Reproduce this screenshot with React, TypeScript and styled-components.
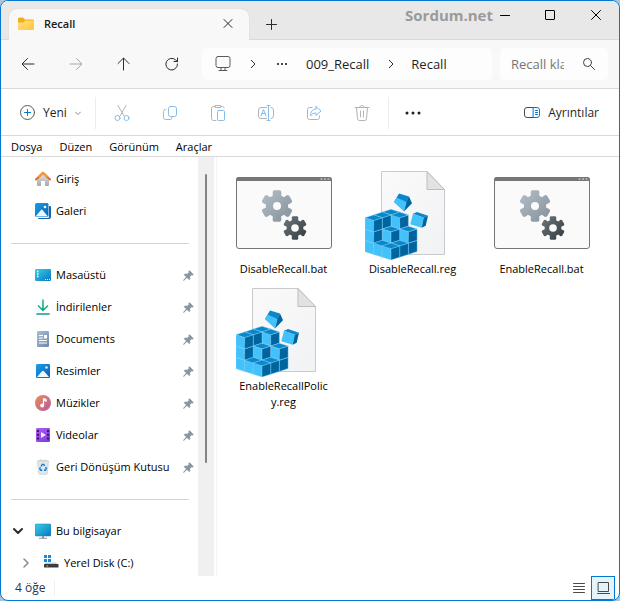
import React from 'react';
import styled, { createGlobalStyle, css } from 'styled-components';

const GlobalStyle = createGlobalStyle`
  *, *::before, *::after { box-sizing: border-box; }
  body {
    margin: 0;
    background: #a9c4dc;
    color: #000;
    font-family: "Open Sans", "Noto Sans", sans-serif;
    font-size: 12px;
    line-height: 16px;
  }
  button, input { font: inherit; color: inherit; }
  svg { display: block; flex: none; }
`;

const Window = styled.main`
  display: flex;
  flex-direction: column;
  height: 100vh;
  min-height: 400px;
  border: 1px solid #0078d4;
  border-radius: 8px;
  background: #fff;
  overflow: hidden;
`;

const PlainButton = styled.button`
  display: flex;
  align-items: center;
  padding: 0;
  border: 0;
  background: none;
  white-space: nowrap;
`;

const TitleBar = styled.header`
  display: flex;
  height: 39px;
  flex: none;
  padding-left: 8px;
  background: #e8e8e8;
  box-shadow: inset 0 -1px #d9d9d9;
`;

const Tab = styled.div`
  display: flex;
  align-items: center;
  width: 240px;
  margin-top: 8px;
  padding: 0 13px 1px 8px;
  gap: 9px;
  border-radius: 8px 8px 0 0;
  background: #f8f8f8;
  box-shadow: 0 0 1px #bdbdbd;
  clip-path: inset(-2px -2px 0 -2px);
`;

const TabTitle = styled.span`
  flex: 1;
  color: #1a1a1a;
  font-size: 11px;
  font-weight: 600;
`;

const NewTab = styled(PlainButton)`
  width: 44px;
  justify-content: center;
  padding-top: 6px;
`;

const Brand = styled.div`
  flex: 1;
  padding-top: 4px;
  color: #9a9a9a;
  font-size: 15px;
  line-height: 20px;
  font-weight: 700;
  text-align: right;
`;

const Caption = styled.div`
  display: flex;
  height: 28px;
`;

const CaptionButton = styled(PlainButton)<{ $narrow?: boolean }>`
  width: 46px;
  justify-content: center;
  ${p => p.$narrow && css`
    width: 34px;
    padding-right: 10px;
  `}
`;

const NavBar = styled.nav`
  display: flex;
  align-items: center;
  height: 49px;
  flex: none;
  gap: 8px;
  padding: 0 11px 0 3px;
  border-bottom: 1px solid #d9d9d9;
  background: #f8f8f8;
`;

const NavButtons = styled.div`
  display: flex;
  width: 190px;
  flex: none;
`;

const NavButton = styled(PlainButton)`
  width: 48px;
  height: 32px;
  flex: none;
  justify-content: center;
`;

const Address = styled.div`
  display: flex;
  align-items: center;
  flex: 1;
  height: 32px;
  padding-left: 13px;
  border-radius: 5px;
  background: #fdfdfd;
  color: #1f1f1f;
  font-size: 13px;
`;

const Crumb = styled(PlainButton)<{ $gap: number }>`
  margin-right: ${p => p.$gap}px;
`;

const Search = styled.label`
  display: flex;
  align-items: center;
  justify-content: space-between;
  width: 108px;
  height: 32px;
  padding: 0 13px 0 11px;
  border-radius: 5px;
  background: #fdfdfd;
  font-size: 13px;
`;

const SearchInput = styled.input`
  width: 53px;
  padding: 0;
  border: 0;
  outline: 0;
  background: none;
  &::placeholder { color: #767676; opacity: 1; }
`;

const ToolBar = styled.div`
  display: flex;
  align-items: center;
  height: 47px;
  flex: none;
  padding: 2px 20px 0 18px;
  border-bottom: 1px solid #d9d9d9;
  color: #1f1f1f;
`;

const NewButton = styled(PlainButton)`
  width: 76px;
  gap: 8px;
`;

const ToolButton = styled(PlainButton)`
  width: 48px;
  height: 32px;
  justify-content: center;
`;

const ToolGroup = styled.div`
  display: flex;
  margin-right: auto;
  border-left: 1px solid #ededed;
  padding-left: 2px;
`;

const ToolItems = styled.div`
  display: flex;
  padding-right: 2px;
  border-right: 1px solid #ededed;
`;

const Details = styled(PlainButton)`
  gap: 8px;
`;

const MenuBar = styled.div`
  display: flex;
  align-items: center;
  height: 21px;
  flex: none;
  gap: 17px;
  padding: 1px 10px 0;
  border-bottom: 1px solid #d9d9d9;
  font-size: 11px;
`;

const Body = styled.div`
  display: flex;
  flex: 1;
  min-height: 0;
  font-size: 11px;
`;

const SideBar = styled.aside`
  display: flex;
  flex-direction: column;
  width: 197px;
  flex: none;
  padding-top: 6px;
  overflow: hidden;
`;

const SideItem = styled(PlainButton)<{ $level?: 'root' | 'child' }>`
  height: 32px;
  flex: none;
  gap: 5px;
  padding: 0 4px 0 34px;
  text-align: left;
  span { flex: 1; }
  ${p => p.$level && css`padding-left: ${p.$level === 'root' ? 11 : 19}px;`}
`;

const TwistySlot = styled.i`
  display: flex;
  width: 18px;
`;

const SideRule = styled.hr`
  width: 178px;
  flex: none;
  margin: 16px 0 15px 10px;
  border: 0;
  border-top: 1px solid #d4d4d4;
`;

const ScrollTrack = styled.div`
  width: 19px;
  flex: none;
  padding: 17px 7px;
  border-right: 1px solid #f3f3f3;
  background: linear-gradient(to right, #f0f0f0 16px, #fff 16px);
`;

const ScrollThumb = styled.div`
  width: 2px;
  height: 75%;
  border-radius: 1px;
  background: #858585;
`;

const Files = styled.section`
  display: grid;
  grid-template-columns: repeat(auto-fill, 129px);
  align-content: start;
  flex: 1;
  gap: 4px 0;
  padding: 7px 0 0 2px;
`;

const FileTile = styled(PlainButton)`
  flex-direction: column;
  justify-content: flex-start;
  gap: 1px;
  min-height: 113px;
`;

const FileName = styled.span`
  width: 92px;
  text-align: center;
  white-space: normal;
  overflow-wrap: anywhere;
`;

const StatusBar = styled.footer`
  display: flex;
  align-items: center;
  height: 24px;
  flex: none;
  padding: 0 4px 0 14px;
  color: #1e395b;
`;

const ItemCount = styled.span`
  width: 40px;
  margin-right: auto;
  border-right: 1px solid #f0f0f0;
`;

const ViewButton = styled(PlainButton)<{ $active?: boolean }>`
  width: 24px;
  height: 24px;
  justify-content: center;
  border: 1px solid ${p => (p.$active ? '#0078d4' : 'transparent')};
  background: ${p => (p.$active ? '#e5f3fb' : 'none')};
`;

const HiddenDefs = styled.svg`
  position: absolute;
`;

type LineProps = { d: string; size?: number; color?: string; width?: number; children?: React.ReactNode };
const Line = ({ d, size = 16, color = '#2b2b2b', width = 1, children }: LineProps) => (
  <svg width={size} height={size} viewBox={`0 0 ${size} ${size}`} fill="none" stroke={color}
    strokeWidth={width} strokeLinecap="round" strokeLinejoin="round" aria-hidden="true">
    <path d={d} />
    {children}
  </svg>
);

const Dots = ({ size, r }: { size: number; r: number }) => (
  <svg width={size} height="16" viewBox={`0 0 ${size} 16`} fill="#1f1f1f" aria-hidden="true">
    <circle cx={2} cy="8" r={r} /><circle cx={size / 2} cy="8" r={r} /><circle cx={size - 2} cy="8" r={r} />
  </svg>
);

const Defs = () => (
  <HiddenDefs width="0" height="0" aria-hidden="true">
    <defs>
      <linearGradient id="folder" x2="1" y2="1"><stop stopColor="#ffe08a" /><stop offset="1" stopColor="#ffc736" /></linearGradient>
      <linearGradient id="blue" x2="1" y2="1"><stop stopColor="#1aa0e8" /><stop offset="1" stopColor="#0a5fb8" /></linearGradient>
      <linearGradient id="cyan" x2="1" y2="1"><stop stopColor="#35d3e4" /><stop offset="1" stopColor="#0b74c4" /></linearGradient>
      <linearGradient id="green" gradientUnits="userSpaceOnUse" x1="0" y1="1" x2="0" y2="15"><stop stopColor="#2fc290" /><stop offset="1" stopColor="#0a9b92" /></linearGradient>
      <linearGradient id="slate" x2="1" y2="1"><stop stopColor="#a9bfd6" /><stop offset="1" stopColor="#6c89aa" /></linearGradient>
      <linearGradient id="music" x2="1" y2="1"><stop stopColor="#f08b54" /><stop offset="1" stopColor="#b3599f" /></linearGradient>
      <linearGradient id="video" x2="1" y2="1"><stop stopColor="#b160ee" /><stop offset="1" stopColor="#7b37dd" /></linearGradient>
      <linearGradient id="gearLight" x2="1" y2="1"><stop stopColor="#b4bfc8" /><stop offset="1" stopColor="#84909a" /></linearGradient>
      <linearGradient id="gearDark" x2="1" y2="1"><stop stopColor="#6b777e" /><stop offset="1" stopColor="#363b3e" /></linearGradient>
      <linearGradient id="paper" x2="1" y2="1"><stop stopColor="#fafafa" /><stop offset="1" stopColor="#f1f2f4" /></linearGradient>
      <linearGradient id="wall" x2="0" y2="1"><stop stopColor="#e3e3e3" /><stop offset="1" stopColor="#a9a9a9" /></linearGradient>
    </defs>
  </HiddenDefs>
);

const sideIcons: Record<string, React.ReactNode> = {
  home: <>
    <path d="M2 7.500 8 2.500l6 5V14a1 1 0 0 1-1 1h-3v-5H6v5H3a1 1 0 0 1-1-1z" fill="url(#wall)" />
    <path d="m1 8.500 7-6.800 7 6.800" fill="none" stroke="#e8662a" strokeWidth="2" strokeLinecap="round" strokeLinejoin="round" />
    <path d="m3.500 6 4.500-4.300L12.500 6" fill="none" stroke="#f39a34" strokeWidth="1.800" strokeLinejoin="round" />
  </>,
  gallery: <>
    <path d="M14 3h1a1 1 0 0 1 1 1v10a2 2 0 0 1-2 2H4a1 1 0 0 1-1-1h10a1 1 0 0 0 1-1z" fill="#1665b5" />
    <rect width="13.500" height="14" rx="1.500" fill="url(#blue)" /><path d="m.500 13.500 5.500-6.500a1 1 0 0 1 1.500 0l5.500 6.500z" fill="#eaf7ff" /><circle cx="10" cy="4" r="1.300" fill="#fff" />
  </>,
  desktop: <>
    <rect y="2" width="16" height="12" rx="1.200" fill="url(#cyan)" /><path d="M2 4.500h2M2 7h2M2 9.500h2" stroke="#eaffff" strokeWidth="1.300" strokeDasharray="1.500" /><path d="M10 12.500h1m1 0h1m1 0h1" stroke="#d8f4ff" />
  </>,
  download: <path d="M8 1v10M3.500 7 8 11.500 12.500 7M2 15h12" fill="none" stroke="url(#green)" strokeWidth="1.700" strokeLinecap="round" strokeLinejoin="round" />,
  documents: <>
    <rect x="2" width="12" height="16" rx="1.200" fill="url(#slate)" /><path d="M4 4.500h4M4 7h4M4 9.500h8M4 12h8" stroke="#fff" /><rect x="9" y="4" width="3" height="3.500" fill="#fff" />
  </>,
  pictures: <>
    <rect x="1" y="1" width="14" height="14" rx="1.200" fill="url(#blue)" /><path d="M2 14 7 8.300a1.300 1.300 0 0 1 2 0L14 14z" fill="#f3faff" /><circle cx="11.500" cy="4.500" r="1.300" fill="#d8f0ff" />
  </>,
  music: <>
    <circle cx="8" cy="8" r="8" fill="url(#music)" /><path d="M8.500 3.500v6.500M8.500 3.500l2.500 1v1.500L8.500 5" fill="#fff" stroke="#fff" strokeWidth="1.200" /><circle cx="7.200" cy="10.500" r="2" fill="#fff" />
  </>,
  videos: <>
    <rect x="1" y="1" width="14" height="14" rx="1.200" fill="url(#video)" /><path d="M3 3v11M13 3v11" stroke="#3b1671" strokeWidth="2" strokeDasharray="2 1.700" /><path d="M6 5v6l5-3z" fill="#f2e6ff" />
  </>,
  bin: <>
    <path d="m2.500 2 1.300 12.500a1 1 0 0 0 1 .8h6.400a1 1 0 0 0 1-.8L13.500 2z" fill="#e2e7ea" stroke="#c3cacf" strokeWidth=".700" /><path d="m3.500 2 2-1.300L8 2l2-1 2.500 1" fill="#d5dadd" stroke="#bec7cd" strokeWidth=".700" />
    <path d="m6 7.500 1.200-2h1.600l.900 1.400M10.500 8l.900 1.600-1 1.600H9M7.300 11.200H5.600l-.900-1.500L5.500 8.300" fill="none" stroke="#1782d4" strokeWidth="1.400" />
  </>,
  computer: <>
    <rect y="1" width="16" height="12" rx="1" fill="url(#cyan)" stroke="#2379a7" strokeWidth=".500" /><path d="M7 13h2v2H7zM4 14.700h8v1H4z" fill="#8796a1" />
  </>,
  disk: <>
    <path d="M1 0h3v3H1zm4 0h3v3H5zM1 4h3v3H1zm4 0h3v3H5z" fill="#0d8ee4" /><path d="m2.500 7.500-1.500 2h14l-2.500-2z" fill="#c8cbce" /><rect x="1" y="9" width="14.500" height="3.500" rx=".600" fill="#393d41" /><path d="M3.500 11h1.500" stroke="#6ee66e" />
  </>,
};

const SideIcon = ({ name }: { name: string }) => (
  <svg width="16" height="16" viewBox="0 0 16 16" aria-hidden="true">{sideIcons[name]}</svg>
);

const Pin = () => (
  <svg width="11" height="11" viewBox="0 0 11 11" fill="#8b979f" aria-hidden="true">
    <path d="M6.500.300 10.700 4.500 9.500 5.400 8.400 5.300 7.100 6.800 7.200 8.900 6.200 10 3.900 7.800 1 10.700.200 10.700.300 9.900 3 6.900.800 4.700 1.900 3.700 4.200 3.800 5.700 2.400 5.500 1.300z" />
  </svg>
);

const gearPath = (cx: number, cy: number, outer: number, hole: number) => {
  const root = outer * 0.7;
  const points: string[] = [];
  for (let tooth = 0; tooth < 6; tooth += 1) {
    const middle = (tooth * 60 - 90) * (Math.PI / 180);
    [[-0.38, root], [-0.3, outer * 0.93], [-0.2, outer], [0.2, outer], [0.3, outer * 0.93], [0.38, root]].forEach(([turn, r]) => {
      points.push(`${(cx + r * Math.cos(middle + turn)).toFixed(2)} ${(cy + r * Math.sin(middle + turn)).toFixed(2)}`);
    });
  }
  return `M${points.join('L')}ZM${cx - hole} ${cy}a${hole} ${hole} 0 1 0 ${hole * 2} 0a${hole} ${hole} 0 1 0 ${-hole * 2} 0Z`;
};

const BatIcon = () => (
  <svg width="96" height="96" viewBox="0 0 96 96" aria-hidden="true">
    <rect x=".5" y="13.500" width="95" height="71" rx="2.500" fill="#fafafa" stroke="#767676" />
    <path d="M0 16a3 3 0 0 1 3-3h90a3 3 0 0 1 3 3v1H0z" fill="#767676" />
    <path d="M84.500 15h2m1.500 0h2m1.500 0h2" stroke="#e0e0e0" />
    <path d={gearPath(41, 42, 16, 4)} fill="url(#gearLight)" fillRule="evenodd" />
    <path d={gearPath(59, 64, 12, 3.8)} fill="url(#gearDark)" fillRule="evenodd" />
  </svg>
);

const cubeCells = [
  [0, 0, 2], [1, 0, 2], [0, 1, 2], [0, 2, 2],
  [2, 0, 1], [1, 1, 1], [0, 2, 1],
  [2, 0, 0], [2, 1, 0], [1, 2, 0], [0, 2, 0], [2, 2, 0],
].sort((a, b) => a[0] + a[1] + a[2] - (b[0] + b[1] + b[2]));

const Cube = ({ cell: [i, j, k] }: { cell: number[] }) => {
  const w = 8.7, h = 2.8, H = 11.3;
  const x = 26 + (i - j) * w;
  const y = 96 - (4 - i - j) * h - k * H;
  return (
    <g stroke="#8ddcff" strokeWidth=".4" strokeLinejoin="round">
      <path d={`M${x} ${y}l${-w} ${-h}v${-H}l${w} ${h}z`} fill="#43c1fb" />
      <path d={`M${x} ${y}l${w} ${-h}v${-H}l${-w} ${h}z`} fill="#00659f" />
      <path d={`M${x} ${y - H}l${-w} ${-h}l${w} ${-h}l${w} ${h}z`} fill="#0a86cb" />
    </g>
  );
};

const RegIcon = () => (
  <svg width="96" height="96" viewBox="0 0 96 96" aria-hidden="true">
    <path d="M16.500 7.500H62L79.500 25.500V90.500H16.500z" fill="url(#paper)" stroke="#cacaca" />
    <path d="M62 7.500V25.500H79.500z" fill="#e2e2e4" stroke="#bdbdbd" strokeLinejoin="round" />
    {cubeCells.map(cell => <Cube key={cell.join()} cell={cell} />)}
    <path d="M34 29.500 44 32.500 41.500 39 29 38z" fill="#0a86cb" />
    <path d="M29 38.300 31.500 33.500 41.500 38 39 47.500z" fill="#43c1fb" />
    <path d="M41.500 38 44 32.500 47 39.300 39 47.500z" fill="#00659f" />
    <path d="M48 49.700 52 48 63 51.700 58.700 53.700z" fill="#0a86cb" />
    <path d="M45.300 60.300 48 49.700 58.700 53.700 56.700 63.700z" fill="#43c1fb" />
    <path d="M58.700 53.700 63 51.700 60.700 61.700 56.700 63.700z" fill="#00659f" />
  </svg>
);

const tools: [string, React.ReactNode][] = [
  ['Kes', <Line key="i" color="#b3b3b3" d="m4 .500 6 10.500M12 .500 6 11"><g stroke="#84bdec"><circle cx="3.500" cy="13" r="2.500" /><circle cx="12.500" cy="13" r="2.500" /></g></Line>],
  ['Kopyala', <Line key="i" color="#b3b3b3" d="M4 4.500H3.500a2 2 0 0 0-2 2v6a2 2 0 0 0 2 2H8a2 2 0 0 0 2-2"><rect x="6.500" y="1.500" width="8" height="10" rx="2" stroke="#84bdec" /></Line>],
  ['Yapıştır', <Line key="i" color="#b3b3b3" d="M5 1.500H3.500a2 2 0 0 0-2 2v10a2 2 0 0 0 2 2H6M11 1.500h1.500a2 2 0 0 1 1.700 1.500M5.500.500h5v2h-5z"><rect x="7.500" y="5.500" width="7" height="10" rx="1" stroke="#84bdec" /></Line>],
  ['Yeniden adlandır', <Line key="i" color="#b3b3b3" d="M8.500 2.500H3a2.500 2.500 0 0 0-2.500 2.500v6A2.500 2.500 0 0 0 3 13.500h5.500M13 2.500a2.500 2.500 0 0 1 2.500 2.500v6A2.500 2.500 0 0 1 13 13.500"><path stroke="#84bdec" d="M9 .500h3M10.500.500v15M9 15.500h3M3 11l2.500-6.500L8 11M4 8.500h3" /></Line>],
  ['Paylaş', <Line key="i" color="#b3b3b3" d="M6 2.500H3.500a2 2 0 0 0-2 2v8a2 2 0 0 0 2 2h8a2 2 0 0 0 2-2V11"><path stroke="#84bdec" d="M10 1.500 15 6l-5 4.500V8C7 8 5.500 9.500 4.500 11 4.500 7 6.500 4 10 4z" /></Line>],
  ['Sil', <Line key="i" color="#b3b3b3" d="M1 2.500h14M5.500 2.300c0-2.400 5-2.400 5 0M2.500 2.800l1 11a1.800 1.800 0 0 0 1.800 1.700h5.400a1.800 1.800 0 0 0 1.800-1.700l1-11M6.500 6v6M9.500 6v6" />],
];

const pinned: [string, string][] = [
  ['desktop', 'Masaüstü'], ['download', 'İndirilenler'], ['documents', 'Documents'],
  ['pictures', 'Resimler'], ['music', 'Müzikler'], ['videos', 'Videolar'], ['bin', 'Geri Dönüşüm Kutusu'],
];

const files = ['DisableRecall.bat', 'DisableRecall.reg', 'EnableRecall.bat', 'EnableRecallPolicy.reg'];

export default function App() {
  return (
    <>
      <GlobalStyle />
      <Defs />
      <Window>
        <TitleBar>
          <Tab>
            <svg width="18" height="16" viewBox="0 0 18 16" aria-hidden="true">
              <path d="M1 3a1.500 1.500 0 0 1 1.500-1.500H6L8 3.500h7.500A1.500 1.500 0 0 1 17 5v2H1z" fill="#f3ad15" />
              <path d="M1 6.500h5.500L8 4.500h8a1 1 0 0 1 1 1V13a1 1 0 0 1-1 1H2a1 1 0 0 1-1-1z" fill="url(#folder)" />
            </svg>
            <TabTitle>Recall</TabTitle>
            <PlainButton aria-label="Sekmeyi kapat"><Line d="m4 3.500 8 8M12 3.500l-8 8" /></PlainButton>
          </Tab>
          <NewTab aria-label="Yeni sekme"><Line d="M3.500 8.500h10M8.500 3.500v10" /></NewTab>
          <Brand>Sordum.net</Brand>
          <Caption>
            <CaptionButton $narrow aria-label="Simge durumuna küçült"><Line color="#000" d="M3.500 8.500h9" /></CaptionButton>
            <CaptionButton aria-label="Ekranı kapla"><Line color="#000" d="M4 3.500h8a.5.500 0 0 1 .5.500v8a.5.500 0 0 1-.5.500H4a.5.500 0 0 1-.5-.5V4a.5.500 0 0 1 .5-.5z" /></CaptionButton>
            <CaptionButton aria-label="Kapat"><Line color="#000" d="m3.500 3.500 9 9M12.500 3.500l-9 9" /></CaptionButton>
          </Caption>
        </TitleBar>

        <NavBar>
          <NavButtons>
            <NavButton aria-label="Geri"><Line d="M14 8H2.500M7.500 2.500 2 8l5.500 5.500" /></NavButton>
            <NavButton aria-label="İleri" disabled><Line color="#a8a8a8" d="M2 8h11.500M8.500 2.500 14 8l-5.500 5.500" /></NavButton>
            <NavButton aria-label="Yukarı"><Line d="M7.500 14V2.500M2 7.500 7.500 2l5.500 5.500" /></NavButton>
            <NavButton aria-label="Yenile"><Line d="M13.500 8A5.800 5.800 0 1 1 11.500 3.800L13.300 5.500M13.500 2v3.500H10" /></NavButton>
          </NavButtons>
          <Address>
            <Crumb $gap={18} aria-label="Konum">
              <Line color="#5a5a5a" d="M3 .500h10a2 2 0 0 1 2 2v7a2 2 0 0 1-2 2H3a2 2 0 0 1-2-2v-7a2 2 0 0 1 2-2zM6 11.500v3M10 11.500v3M4 14.500h8" />
            </Crumb>
            <Crumb $gap={19} aria-label="Alt klasörler"><Line size={8} d="m2 0 4 4-4 4" /></Crumb>
            <Crumb $gap={18} aria-label="Diğer konumlar"><Dots size={12} r={1.1} /></Crumb>
            <Crumb $gap={18}>009_Recall</Crumb>
            <Crumb $gap={16} aria-label="Alt klasörler"><Line size={8} d="m2 0 4 4-4 4" /></Crumb>
            <Crumb $gap={0}>Recall</Crumb>
          </Address>
          <Search>
            <SearchInput aria-label="Ara" placeholder="Recall klasöründe ara" />
            <Line size={12} color="#3f3f3f" d="M8.500 4.500a4 4 0 1 1-8 0 4 4 0 0 1 8 0zM7.500 7.500 11.500 11.500" />
          </Search>
        </NavBar>

        <ToolBar>
          <NewButton>
            <Line color="#5a5a5a" d="M15.500 7.500a7 7 0 1 1-14 0 7 7 0 0 1 14 0z"><path stroke="#0078d4" d="M8.500 4.500v6M5.500 7.500h6" /></Line>
            Yeni
            <Line size={6} color="#8a8a8a" d="m.500 2 2.500 2.500L5.500 2" />
          </NewButton>
          <ToolGroup>
            <ToolItems>
              {tools.map(([label, icon]) => <ToolButton key={label} aria-label={label} disabled>{icon}</ToolButton>)}
            </ToolItems>
            <ToolButton aria-label="Daha fazla"><Dots size={16} r={1.5} /></ToolButton>
          </ToolGroup>
          <Details>
            <Line color="#4a4a4a" d="M9.500 2.500H3a2.500 2.500 0 0 0-2.500 2.500v5A2.500 2.500 0 0 0 3 12.500h6.500">
              <path stroke="#0078d4" d="M9.500 2.500H13a2.500 2.500 0 0 1 2.500 2.500v5a2.500 2.500 0 0 1-2.500 2.500H9.500zM11.500 5.500h2M11.500 7.500h2M11.500 9.500h2" />
            </Line>
            Ayrıntılar
          </Details>
        </ToolBar>

        <MenuBar>
          {['Dosya', 'Düzen', 'Görünüm', 'Araçlar'].map(name => <PlainButton key={name}>{name}</PlainButton>)}
        </MenuBar>

        <Body>
          <SideBar>
            <SideItem><SideIcon name="home" /><span>Giriş</span></SideItem>
            <SideItem><SideIcon name="gallery" /><span>Galeri</span></SideItem>
            <SideRule />
            {pinned.map(([icon, label]) => (
              <SideItem key={label}><SideIcon name={icon} /><span>{label}</span><Pin /></SideItem>
            ))}
            <SideRule />
            <SideItem $level="root">
              <TwistySlot><Line size={12} width={2} d="m2 4 4 4 4-4" /></TwistySlot>
              <SideIcon name="computer" /><span>Bu bilgisayar</span>
            </SideItem>
            <SideItem $level="child">
              <TwistySlot><Line size={12} color="#8a8a8a" width={1.5} d="m4 2 4 4-4 4" /></TwistySlot>
              <SideIcon name="disk" /><span>Yerel Disk (C:)</span>
            </SideItem>
          </SideBar>
          <ScrollTrack><ScrollThumb /></ScrollTrack>
          <Files>
            {files.map(name => (
              <FileTile key={name}>
                {name.endsWith('.bat') ? <BatIcon /> : <RegIcon />}
                <FileName>{name}</FileName>
              </FileTile>
            ))}
          </Files>
        </Body>

        <StatusBar>
          <ItemCount>4 öğe</ItemCount>
          <ViewButton aria-label="Ayrıntılar görünümü"><Line size={14} color="#4a4a4a" d="M1.500 2.500h11M1.500 5.500h11M1.500 8.500h11M1.500 11.500h11" /></ViewButton>
          <ViewButton $active aria-label="Büyük simgeler"><Line size={14} color="#4a4a4a" d="M2.500 1.500h10v9h-10zM1.500 12.500h12" /></ViewButton>
        </StatusBar>
      </Window>
    </>
  );
}
